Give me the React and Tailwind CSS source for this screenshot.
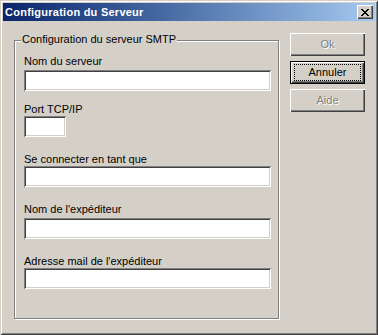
const font = { fontFamily: '"Liberation Sans", Arial, sans-serif' }

function Field({ label, width = 'w-[247px]', labelClass = '' }) {
  return (
    <div className="flex flex-col">
      <div className={`h-[13px] leading-[13px] text-[11px] text-black ${labelClass}`}>{label}</div>
      {/* sunken edit box */}
      <div
        className={`${width} h-[21px] bg-white shadow-[inset_1px_1px_0_#808080,inset_-1px_-1px_0_#ffffff,inset_2px_2px_0_#404040,inset_-2px_-2px_0_#d4d0c8]`}
      />
    </div>
  )
}

function Button({ children, disabled, isDefault }) {
  const bevel =
    'shadow-[inset_1px_1px_0_#ffffff,inset_-1px_-1px_0_#404040,inset_-2px_-2px_0_#808080]'
  if (isDefault) {
    return (
      <div className="w-[75px] h-[23px] border border-black bg-[#d4d0c8]">
        <div className={`w-full h-full flex px-[3px] py-[2px] ${bevel}`}>
          <span className="flex-1 flex items-center justify-center border border-dotted border-black text-[11px] leading-[13px] text-black">
            {children}
          </span>
        </div>
      </div>
    )
  }
  return (
    <div className={`w-[75px] h-[23px] bg-[#d4d0c8] flex items-center justify-center ${bevel}`}>
      <span
        className={`text-[11px] leading-[13px] ${
          disabled ? 'text-[#808080] [text-shadow:1px_1px_0_#ffffff]' : 'text-black'
        }`}
      >
        {children}
      </span>
    </div>
  )
}

export default function App() {
  return (
    <div
      className="w-[378px] h-[335px] bg-[#d4d0c8] p-[3px] flex flex-col shadow-[inset_1px_1px_0_#d4d0c8,inset_-1px_-1px_0_#404040,inset_2px_2px_0_#ffffff,inset_-2px_-2px_0_#808080]"
      style={font}
    >
      {/* ── Title bar ─────────────────────────────────────────── */}
      <div className="h-[18px] flex items-center justify-between pl-[2px] pr-[2px] bg-gradient-to-r from-[#0a246a] to-[#a6caf0]">
        <span className="text-[11px] font-bold text-white leading-[13px] tracking-[0.25px]">Configuration du Serveur</span>
        <div className="w-[16px] h-[14px] bg-[#d4d0c8] flex items-center justify-center shadow-[inset_1px_1px_0_#ffffff,inset_-1px_-1px_0_#404040,inset_-2px_-2px_0_#808080]">
          <svg width="8" height="7" viewBox="0 0 8 7" shapeRendering="crispEdges">
            <path
              d="M0 0h2v1H0zM6 0h2v1H6zM1 1h2v1H1zM5 1h2v1H5zM2 2h4v1H2zM3 3h2v1H3zM2 4h4v1H2zM1 5h2v1H1zM5 5h2v1H5zM0 6h2v1H0zM6 6h2v1H6z"
              fill="#000"
            />
          </svg>
        </div>
      </div>

      {/* ── Body ──────────────────────────────────────────────── */}
      <div className="flex items-start pl-[11px]">
        {/* group box */}
        <div className="relative mt-[19px] w-[265px] h-[279px] border border-[#808080] shadow-[1px_1px_0_#ffffff,inset_1px_1px_0_#ffffff] pl-[9px] pt-[14px]">
          <span className="absolute left-[6px] top-[-8px] px-[1px] bg-[#d4d0c8] text-[11px] leading-[13px] text-black">
            Configuration du serveur SMTP
          </span>
          <Field label="Nom du serveur" labelClass="mb-[2px]" />
          <Field label="Port TCP/IP" width="w-[42px]" labelClass="mt-[12px]" />
          <Field label="Se connecter en tant que" labelClass="mt-[16px]" />
          <Field label="Nom de l'expéditeur" labelClass="mt-[16px] mb-[2px]" />
          <Field label="Adresse mail de l'expéditeur" labelClass="mt-[16px]" />
        </div>

        {/* buttons */}
        <div className="ml-[11px] mt-[12px] flex flex-col gap-[5px]">
          <Button disabled>Ok</Button>
          <Button isDefault>Annuler</Button>
          <Button disabled>Aide</Button>
        </div>
      </div>
    </div>
  )
}
